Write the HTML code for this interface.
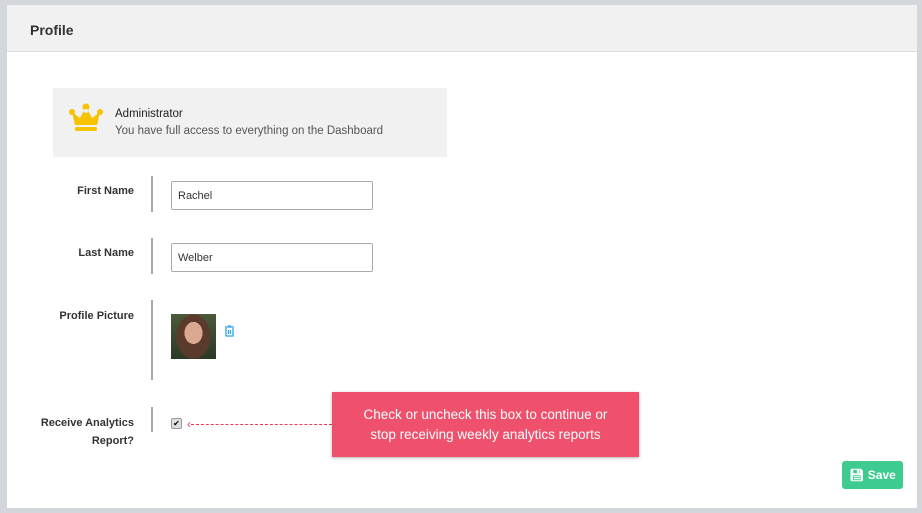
<!DOCTYPE html>
<html><head><style>
body{margin:0;width:922px;height:513px;background:#d3d6db;font-family:"Liberation Sans",sans-serif;position:relative;overflow:hidden}
.card{position:absolute;left:7px;top:5px;width:910px;height:503px;background:#fff}
.hdr{height:46px;background:#f1f1f1;border-bottom:1px solid #dcdcdc;}
.hdr b{position:absolute;left:23px;top:17px;font-size:14px;color:#333}
.abs{position:absolute}
.lbl{position:absolute;font-size:11px;font-weight:bold;color:#333;text-align:right;left:0}
.bar{position:absolute;left:151px;width:2px;background:#aaa}
input{position:absolute;left:171px;width:202px;height:29px;border:1px solid #aaa;border-radius:2px;box-sizing:border-box;padding:0 6px;font-size:11px;font-family:"Liberation Sans",sans-serif;color:#333}
</style></head><body>
<div class="card"><div class="hdr"><b>Profile</b></div></div>
<div class="abs" style="left:53px;top:88px;width:394px;height:69px;background:#f1f1f1"></div>
<svg class="abs" style="left:69px;top:103px" width="34" height="30" viewBox="0 0 34 30"><circle cx="17" cy="4" r="3.5" fill="#f7c300"/><circle cx="3" cy="9" r="3" fill="#f7c300"/><circle cx="31" cy="9" r="3" fill="#f7c300"/><path d="M3 9 L11 15 L17 4 L23 15 L31 9 L28 22 L6 22Z" fill="#f7c300"/><circle cx="17" cy="8" r="2" fill="#f1f1f1"/><rect x="6" y="24" width="22" height="4" rx="1.5" fill="#f7c300"/></svg>
<div class="abs" style="left:115px;top:108px;font-size:11.5px;color:#222">Administrator</div>
<div class="abs" style="left:115px;top:125px;font-size:11.5px;color:#555">You have full access to everything on the Dashboard</div>
<div class="lbl" style="top:185px;width:134px">First Name</div><div class="bar" style="top:176px;height:36px"></div>
<input style="top:181px" value="Rachel">
<div class="lbl" style="top:247px;width:134px">Last Name</div><div class="bar" style="top:238px;height:36px"></div>
<input style="top:243px" value="Welber">
<div class="lbl" style="top:310px;width:134px">Profile Picture</div><div class="bar" style="top:300px;height:80px"></div>
<div class="abs" style="left:171px;top:314px;width:45px;height:45px;background:radial-gradient(ellipse 9px 11px at 50% 42%,#d9a88e 0 100%,transparent 101%),radial-gradient(ellipse 17px 22px at 50% 50%,#5a3a2a 0 100%,transparent 101%),linear-gradient(#4a5a3a,#2a3a25)"></div>
<svg class="abs" style="left:224px;top:325px" width="11" height="12" viewBox="0 0 11 12"><path d="M1 2h9M4 1h3M2 3v8h7V3M4.5 5v4M6.5 5v4" stroke="#2aa8e8" stroke-width="1.3" fill="none"/></svg>
<div class="lbl" style="top:414px;width:134px;line-height:18px">Receive Analytics<br>Report?</div><div class="bar" style="top:407px;height:25px"></div>
<div class="abs" style="left:171px;top:418px;width:9px;height:9px;border:1px solid #999;border-radius:2px;background:#ddd;font-size:8px;line-height:9px;text-align:center">✔</div>
<div class="abs" style="left:191px;top:424px;width:141px;border-top:1px dashed #f0365a"></div>
<div class="abs" style="left:187px;top:417px;color:#f0365a;font-size:12px">‹</div>
<div class="abs" style="left:332px;top:392px;width:307px;height:65px;background:#ef506c;box-shadow:0 1px 3px rgba(0,0,0,.3);color:#fff;font-size:13.5px;text-align:center;line-height:20px;padding-top:13px;box-sizing:border-box">Check or uncheck this box to continue or<br>stop receiving weekly analytics reports</div>
<div class="abs" style="left:842px;top:461px;width:61px;height:28px;background:#3ecb8f;border-radius:3px;color:#fff;font-size:12px;font-weight:bold;line-height:28px;text-align:center">&#128190;&#xFE0E; Save</div>
</body></html>
